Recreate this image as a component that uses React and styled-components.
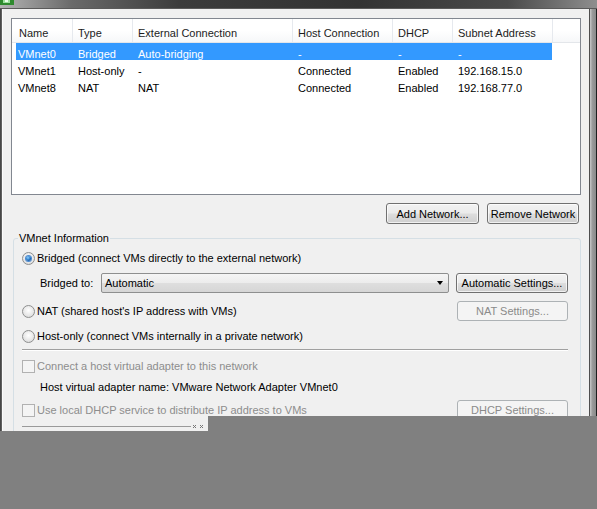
import React from "react";
import styled, { createGlobalStyle, css } from "styled-components";

const Global = createGlobalStyle`
  html, body { margin: 0; padding: 0; background: #808080; }
  body { font-family: "Liberation Sans", Arial, sans-serif; font-size: 11px; color: #000; }
  * { box-sizing: border-box; }
`;

const Frame = styled.div`
  position: relative;
  width: 597px;
  height: 509px;
  overflow: hidden;
  display: flex;
  flex-direction: column;
  background: #f0f0f0;
`;

const TitleStrip = styled.div`
  height: 9px;
  flex: none;
  display: flex;
  align-items: flex-start;
  background: linear-gradient(to right, #b4b4b4 0%, #6a6a6a 12%, #3c3c3c 30%, #333 60%, #4a4a4a 85%, #8e8e8e 100%);
  border-bottom: 1px solid #5a5a5a;
`;

const Body = styled.div`
  flex: 1;
  display: flex;
  min-height: 0;
`;

const LeftEdge = styled.div`
  width: 2px;
  flex: none;
  background: linear-gradient(to right, #3a3a3a, #6d6d6d);
`;

const RightEdge = styled.div`
  width: 8px;
  flex: none;
  border-left: 1px solid #4e4e4e;
  border-right: 1px solid #1e1e1e;
  background: linear-gradient(to right, #c9c9c9, #9a9a9a 40%, #8a8a8a);
`;

const Content = styled.div`
  flex: 1;
  padding: 9px 8px 0 8px;
  background: #f0f0f0;
  border-left: 1px solid #fbfbfb;
  display: flex;
  flex-direction: column;
`;

const ListBox = styled.div`
  height: 177px;
  border: 1px solid #828790;
  background: #fff;
  display: flex;
  flex-direction: column;
`;

const HeaderRow = styled.div`
  display: flex;
  height: 24px;
  flex: none;
  background: linear-gradient(#ffffff, #ffffff 50%, #f6f7f9);
  border-bottom: 1px solid #e3e6ea;
`;

const HeaderCell = styled.div`
  width: ${(p) => p.$w}px;
  flex: none;
  padding-top: 5px;
  padding-left: ${(p) => p.$pad}px;
  display: flex;
  align-items: center;
  color: #1c1c1c;
  border-right: 1px solid #e6e9ee;
  white-space: nowrap;
`;

const HeaderFill = styled.div`
  flex: 1;
`;

const Row = styled.div`
  display: flex;
  height: 17px;
  flex: none;
  padding-top: 5px;
  margin-left: 4px;
  width: 536px;
  align-items: center;
  ${(p) =>
    p.$selected &&
    css`
      background: #3399ff;
      color: #fff;
    `}
`;

const Cell = styled.div`
  width: ${(p) => p.$w}px;
  flex: none;
  padding-left: ${(p) => p.$pad}px;
  white-space: nowrap;
`;

const ButtonRow = styled.div`
  display: flex;
  justify-content: flex-end;
  gap: 8px;
  margin-top: 8px;
  padding-right: 2px;
`;

const Button = styled.div`
  height: ${(p) => p.$h || 21}px;
  width: ${(p) => p.$w}px;
  flex: none;
  display: flex;
  align-items: center;
  justify-content: center;
  border: 1px solid #707070;
  border-radius: 3px;
  background: linear-gradient(#f2f2f2, #ebebeb 48%, #dddddd 52%, #cfcfcf);
  box-shadow: inset 0 0 0 1px rgba(255, 255, 255, 0.7);
  color: #000;
  white-space: nowrap;
  ${(p) =>
    p.$disabled &&
    css`
      border-color: #adb2b5;
      background: #f4f4f4;
      box-shadow: none;
      color: #8a8a8a;
    `}
`;

const GroupBox = styled.div`
  margin: 14px 0 0 2px;
  border: 1px solid #d5dfe5;
  border-radius: 3px;
  padding: 0 12px 0 8px;
  flex: 1;
  display: flex;
  flex-direction: column;
`;

const GroupTitle = styled.div`
  margin: -7px 0 0 -4px;
  padding: 0 1px;
  height: 13px;
  line-height: 13px;
  background: #f0f0f0;
  align-self: flex-start;
`;

const OptionRow = styled.div`
  display: flex;
  align-items: center;
  height: ${(p) => p.$h || 16}px;
  margin-top: ${(p) => p.$mt}px;
  gap: 2px;
  color: ${(p) => (p.$disabled ? "#8d8d8d" : "#000")};
`;

const Spacer = styled.div`
  flex: 1;
`;

const Radio = styled.span`
  width: 13px;
  height: 13px;
  flex: none;
  border-radius: 50%;
  border: 1px solid #8e8f8f;
  background: radial-gradient(circle at 50% 40%, #ffffff 0%, #e6e6e6 60%, #d0d0d0 100%);
  display: flex;
  align-items: center;
  justify-content: center;
  &::after {
    content: "";
    width: 5px;
    height: 5px;
    border-radius: 50%;
    display: ${(p) => (p.$checked ? "block" : "none")};
    background: radial-gradient(circle at 40% 35%, #8ad0ff 0%, #1f6fc0 55%, #0f3e7a 100%);
    box-shadow: 0 0 0 1px #4c8ad0;
  }
`;

const Checkbox = styled.span`
  width: 13px;
  height: 13px;
  flex: none;
  border: 1px solid #b1b1b1;
  background: #f4f4f4;
`;

const IndentLabel = styled.span`
  width: ${(p) => p.$w || "auto"};
  padding-left: 18px;
  flex: none;
  white-space: nowrap;
`;

const Select = styled.div`
  flex: 1;
  height: 20px;
  margin-right: 5px;
  border: 1px solid #8e8f8f;
  border-radius: 2px;
  background: linear-gradient(#f5f5f5, #ececec 50%, #dedede 52%, #d6d6d6);
  display: flex;
  align-items: center;
  padding: 0 5px 0 3px;
`;

const Arrow = styled.span`
  width: 0;
  height: 0;
  border-left: 3.5px solid transparent;
  border-right: 3.5px solid transparent;
  border-top: 4px solid #000;
`;

const Separator = styled.div`
  margin-top: 5px;
  height: 2px;
  border-top: 1px solid #a0a0a0;
  border-bottom: 1px solid #ffffff;
`;

const BottomLine = styled.div`
  margin-top: 4px;
  display: flex;
  align-items: center;
  gap: 1px;
  width: 182px;
`;

const Rule = styled.div`
  flex: 1;
  height: 1px;
  background: #9a9a9a;
`;

const Overlay = styled.div`
  position: absolute;
  background: #808080;
  top: ${(p) => p.$top}px;
  left: ${(p) => p.$left}px;
  right: ${(p) => p.$right}px;
  bottom: 0;
`;

const AppIcon = styled.svg`
  display: block;
  flex: none;
`;

const cols = [
  { h: "Name", w: 61 },
  { h: "Type", w: 60 },
  { h: "External Connection", w: 160 },
  { h: "Host Connection", w: 100 },
  { h: "DHCP", w: 60 },
  { h: "Subnet Address", w: 100 },
];

const rows = [
  ["VMnet0", "Bridged", "Auto-bridging", "-", "-", "-"],
  ["VMnet1", "Host-only", "-", "Connected", "Enabled", "192.168.15.0"],
  ["VMnet8", "NAT", "NAT", "Connected", "Enabled", "192.168.77.0"],
];

export default function App() {
  return (
    <>
      <Global />
      <Frame>
        <TitleStrip>
          <AppIcon width="15" height="5" viewBox="0 0 15 5">
            <rect x="0" y="0" width="14" height="5" fill="#2e8a2e" />
            <rect x="3" y="0" width="7" height="3" fill="#9be09b" />
            <rect x="5" y="0" width="3" height="2" fill="#eaffea" />
          </AppIcon>
        </TitleStrip>
        <Body>
          <LeftEdge />
          <Content>
            <ListBox>
              <HeaderRow>
                {cols.map((c, i) => (
                  <HeaderCell key={c.h} $w={c.w} $pad={i === 0 ? 7 : 5}>
                    {c.h}
                  </HeaderCell>
                ))}
                <HeaderFill />
              </HeaderRow>
              {rows.map((r, ri) => (
                <Row key={r[0]} $selected={ri === 0}>
                  {r.map((v, i) => (
                    <Cell key={i} $w={i === 0 ? 57 : cols[i].w} $pad={i === 0 ? 2 : 5}>
                      {v}
                    </Cell>
                  ))}
                </Row>
              ))}
            </ListBox>
            <ButtonRow>
              <Button $w={93}>Add Network...</Button>
              <Button $w={92}>Remove Network</Button>
            </ButtonRow>
            <GroupBox>
              <GroupTitle>VMnet Information</GroupTitle>
              <OptionRow $mt={5}>
                <Radio $checked />
                <span>Bridged (connect VMs directly to the external network)</span>
              </OptionRow>
              <OptionRow $mt={7} $h={20}>
                <IndentLabel $w="77px">Bridged to:</IndentLabel>
                <Select>
                  <span>Automatic</span>
                  <Spacer />
                  <Arrow />
                </Select>
                <Button $w={112} $h={20}>Automatic Settings...</Button>
              </OptionRow>
              <OptionRow $mt={8} $h={20}>
                <Radio />
                <span>NAT (shared host's IP address with VMs)</span>
                <Spacer />
                <Button $w={111} $h={20} $disabled>NAT Settings...</Button>
              </OptionRow>
              <OptionRow $mt={7}>
                <Radio />
                <span>Host-only (connect VMs internally in a private network)</span>
              </OptionRow>
              <Separator />
              <OptionRow $mt={7} $disabled>
                <Checkbox />
                <span>Connect a host virtual adapter to this network</span>
              </OptionRow>
              <OptionRow $mt={5}>
                <IndentLabel>Host virtual adapter name: VMware Network Adapter VMnet0</IndentLabel>
              </OptionRow>
              <OptionRow $mt={5} $h={20} $disabled>
                <Checkbox />
                <span>Use local DHCP service to distribute IP address to VMs</span>
                <Spacer />
                <Button $w={111} $h={20} $disabled>DHCP Settings...</Button>
              </OptionRow>
              <BottomLine>
                <Rule />
                <svg width="12" height="5" viewBox="0 0 12 5">
                  <path d="M1 1l3 3M4 1L1 4M8 1l3 3M11 1L8 4" stroke="#777" strokeWidth="1" fill="none" />
                </svg>
              </BottomLine>
            </GroupBox>
          </Content>
          <RightEdge />
        </Body>
        <Overlay $top={416} $left={208} $right={0} />
        <Overlay $top={431} $left={0} $right={0} />
      </Frame>
    </>
  );
}
